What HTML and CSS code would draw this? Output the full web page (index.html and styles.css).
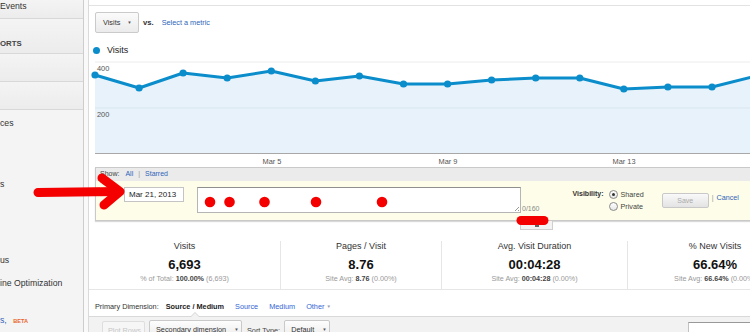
FILE: index.html
```html
<!DOCTYPE html>
<html lang="en">
<head>
    <meta charset="UTF-8">
    <meta name="viewport" content="width=device-width, initial-scale=1.0">
    <title>Audience Overview | Analytics</title>
    <link rel="stylesheet" href="styles.css">
</head>
<body>
<div class="page">
    <aside class="sidebar">
        <div class="side-row side-top">Events</div>
        <div class="side-row side-head">ORTS</div>
        <div class="side-row side-blank"></div>
        <div class="side-row side-blank"></div>
        <ul class="side-list">
            <li class="item-ces">ces</li>
            <li class="item-s">s</li>
            <li class="item-us">us</li>
            <li class="item-seo">ine Optimization</li>
            <li class="item-beta"><span class="side-link">s,</span> <span class="beta">BETA</span></li>
        </ul>
    </aside>
    <div class="gutter"></div>

    <main class="main">
        <div class="metric-bar">
            <button class="select-btn">Visits <span class="caret">&#9660;</span></button>
            <span class="vs">vs.</span>
            <a class="link" href="#">Select a metric</a>
        </div>

        <div class="legend"><span class="legend-dot"></span>Visits</div>

        <svg class="chart" width="670" height="111" viewBox="0 0 670 111">
            <line x1="6" y1="6" x2="670" y2="6" stroke="#ececec"/>
            <line x1="6" y1="52" x2="670" y2="52" stroke="#e4e4e4"/>
            <polygon fill="#e7f2fa" points="6,19 50.1,32 94.1,17 138.2,22 182.3,15 226.4,25 270.4,20 314.5,28 358.6,28 402.6,24 446.7,22 490.8,22 534.8,33 578.9,31 623,31 667,20 667,97 6,97"/>
            <line x1="6" y1="52" x2="670" y2="52" stroke="#d9e7f0"/>
            <line x1="6" y1="97.5" x2="670" y2="97.5" stroke="#a8a8a8"/>
            <polyline fill="none" stroke="#0b8dcb" stroke-width="3" stroke-linejoin="round" points="6,19 50.1,32 94.1,17 138.2,22 182.3,15 226.4,25 270.4,20 314.5,28 358.6,28 402.6,24 446.7,22 490.8,22 534.8,33 578.9,31 623,31 667,20"/>
            <g fill="#0b8dcb">
                <circle cx="6" cy="19" r="3.6"/>
                <circle cx="50.1" cy="32" r="3.6"/>
                <circle cx="94.1" cy="17" r="3.6"/>
                <circle cx="138.2" cy="22" r="3.6"/>
                <circle cx="182.3" cy="15" r="3.6"/>
                <circle cx="226.4" cy="25" r="3.6"/>
                <circle cx="270.4" cy="20" r="3.6"/>
                <circle cx="314.5" cy="28" r="3.6"/>
                <circle cx="358.6" cy="28" r="3.6"/>
                <circle cx="402.6" cy="24" r="3.6"/>
                <circle cx="446.7" cy="22" r="3.6"/>
                <circle cx="490.8" cy="22" r="3.6"/>
                <circle cx="534.8" cy="33" r="3.6"/>
                <circle cx="578.9" cy="31" r="3.6"/>
                <circle cx="623" cy="31" r="3.6"/>
                <circle cx="667" cy="20" r="3.6"/>
            </g>
            <g class="axis-text">
                <text x="8" y="14.6">400</text>
                <text x="8" y="60.6">200</text>
                <text x="183" y="107.8" text-anchor="middle">Mar 5</text>
                <text x="359" y="107.8" text-anchor="middle">Mar 9</text>
                <text x="535" y="107.8" text-anchor="middle">Mar 13</text>
            </g>
        </svg>

        <div class="annotations">
            <div class="annot-show">Show: <a class="link show-all" href="#">All</a><span class="sep">|</span><a class="link" href="#">Starred</a></div>
            <div class="annot-form">
                <input class="annot-date" type="text" value="Mar 21, 2013">
                <div class="annot-text-box">
                    <textarea class="annot-text"></textarea>
                </div>
                <span class="annot-count">0/160</span>
                <div class="annot-vis">
                    <span class="vis-label">Visibility:</span>
                    <div class="vis-options">
                        <label class="vis-option"><span class="radio checked"></span>Shared</label>
                        <label class="vis-option"><span class="radio"></span>Private</label>
                    </div>
                </div>
                <button class="save-btn">Save</button>
                <span class="cancel"><span class="sep">|</span><a class="link" href="#">Cancel</a></span>
            </div>
        </div>
        <div class="annot-tab"><span class="tab-mark"></span></div>

        <div class="stats">
            <div class="stat">
                <div class="stat-label">Visits</div>
                <div class="stat-value">6,693</div>
                <div class="stat-sub">% of Total: <b>100.00%</b> (6,693)</div>
            </div>
            <div class="stat">
                <div class="stat-label">Pages / Visit</div>
                <div class="stat-value">8.76</div>
                <div class="stat-sub">Site Avg: <b>8.76</b> (0.00%)</div>
            </div>
            <div class="stat">
                <div class="stat-label">Avg. Visit Duration</div>
                <div class="stat-value">00:04:28</div>
                <div class="stat-sub">Site Avg: <b>00:04:28</b> (0.00%)</div>
            </div>
            <div class="stat">
                <div class="stat-label">% New Visits</div>
                <div class="stat-value">66.64%</div>
                <div class="stat-sub">Site Avg: <b>66.64%</b> (0.00%)</div>
            </div>
        </div>

        <div class="dimension">
            <span>Primary Dimension:</span>
            <span class="dim-active">Source / Medium</span>
            <a class="dim-link" href="#">Source</a>
            <a class="dim-link" href="#">Medium</a>
            <a class="dim-link" href="#">Other <span class="dim-caret">&#9660;</span></a>
        </div>

        <div class="table-toolbar">
            <button class="tool-btn plot-btn">Plot Rows</button>
            <button class="tool-btn second-btn">Secondary dimension <span class="caret">&#9660;</span></button>
            <span class="sort-label">Sort Type:</span>
            <button class="tool-btn sort-btn">Default <span class="caret">&#9660;</span></button>
            <input class="search-box" type="text">
        </div>
    </main>

    <svg class="markup" width="750" height="332" viewBox="0 0 750 332">
        <g fill="none" stroke="#f40000" stroke-linecap="round" stroke-linejoin="round">
            <path d="M38 192.5 L115 191.5" stroke-width="9"/>
            <path d="M102 178 L120 191.5 L104 205" stroke-width="9"/>
            <path d="M521 220.5 L544 220.5" stroke-width="9"/>
        </g>
        <g fill="#f40000">
            <circle cx="210" cy="202" r="5.3"/>
            <circle cx="229.5" cy="202" r="5.3"/>
            <circle cx="264.5" cy="202" r="5.3"/>
            <circle cx="316" cy="202" r="5.3"/>
            <circle cx="382" cy="202" r="5.3"/>
        </g>
    </svg>
</div>
</body>
</html>
```

FILE: styles.css
```css
html, body {
    margin: 0;
    padding: 0;
    overflow: hidden;
    background-color: #fff;
}

body {
    font-family: "Liberation Sans", Arial, sans-serif;
    font-size: 7.3px;
    color: #333;
}

.page {
    position: relative;
    display: flex;
    width: 820px;
    height: 332px;
}

a {
    text-decoration: none;
}

.link {
    color: #2f64b9;
}

/* left navigation */

.sidebar {
    width: 83px;
    flex-shrink: 0;
    background-color: #f4f4f4;
    border-right: 1px solid #cdcdcd;
    font-size: 8.7px;
    color: #333;
    white-space: nowrap;
    overflow: hidden;
}

.side-row {
    border-bottom: 1px solid #d8d8d8;
    background: linear-gradient(#f4f4f4, #ececec);
}

.side-top {
    height: 18px;
    line-height: 12px;
}

.side-head {
    height: 15px;
    padding-top: 19px;
    line-height: 12px;
    font-size: 7.8px;
    font-weight: bold;
    color: #444;
}

.side-blank {
    height: 27px;
}

.side-list {
    margin: 0;
    padding: 0;
    list-style: none;
}

.side-list li {
    line-height: 12px;
}

.item-ces { margin-top: 7px; }
.item-s { margin-top: 49px; }
.item-us { margin-top: 64px; }
.item-seo { margin-top: 11px; }
.item-beta { margin-top: 25px; }

.side-link {
    color: #2f64b9;
}

.beta {
    margin-left: 4px;
    font-size: 5.6px;
    font-weight: bold;
    color: #e8642c;
}

.gutter {
    width: 4px;
    flex-shrink: 0;
    background-color: #f9f9f9;
}

/* main column */

.main {
    flex: 1;
    min-width: 0;
    border-left: 1px solid #dadada;
}

.metric-bar {
    display: flex;
    align-items: center;
    margin-top: 5px;
    padding: 6px 0 0 6px;
    border-top: 1px solid #e2e2e2;
}

.select-btn {
    width: 44px;
    height: 21px;
    padding: 0 0 0 7px;
    text-align: left;
    font-family: inherit;
    font-size: 7.3px;
    color: #333;
    background: linear-gradient(#fbfbfb, #ebebeb);
    border: 1px solid #cacaca;
    border-radius: 2px;
}

.select-btn .caret {
    margin-left: 5px;
}

.caret {
    font-size: 4.5px;
    color: #555;
    vertical-align: 1px;
}

.vs {
    margin: 0 8px 0 4px;
    font-weight: bold;
    font-size: 7.7px;
    color: #333;
}

.legend {
    display: flex;
    align-items: center;
    margin-top: 11px;
    padding-left: 4px;
    height: 12px;
    font-size: 9px;
    color: #222;
}

.legend-dot {
    width: 7px;
    height: 7px;
    margin-right: 7px;
    border-radius: 50%;
    background-color: #0b8dcb;
}

.chart {
    display: block;
}

.axis-text {
    font-family: "Liberation Sans", Arial, sans-serif;
    font-size: 7.4px;
    fill: #555;
}

/* annotations */

.annotations {
    margin-left: 6px;
    border: 1px solid #c9c9c9;
    box-shadow: 0 1px 1px rgba(0, 0, 0, 0.15);
}

.annot-show {
    height: 13px;
    padding-left: 4px;
    line-height: 12px;
    font-size: 7px;
    color: #444;
    background-color: #ebebeb;
}

.show-all {
    margin-left: 4px;
}

.sep {
    color: #999;
    margin: 0 5px;
}

.annot-form {
    display: flex;
    align-items: flex-start;
    height: 33px;
    padding: 6px 0 0 28px;
    background-color: #fdfde9;
}

.annot-date {
    box-sizing: border-box;
    width: 60px;
    height: 15px;
    margin: 0;
    padding: 0 0 0 4px;
    font-family: inherit;
    font-size: 8px;
    color: #222;
    background-color: #fff;
    border: 1px solid #c4c4c4;
}

.annot-text-box {
    position: relative;
    width: 324px;
    height: 26px;
    margin-left: 13px;
}

.annot-text-box::after {
    content: "";
    position: absolute;
    right: 2px;
    bottom: 2px;
    width: 6px;
    height: 6px;
    background: repeating-linear-gradient(135deg, transparent 0, transparent 1.2px, #999 1.2px, #999 2px);
    clip-path: polygon(100% 0, 100% 100%, 0 100%);
}

.annot-text {
    box-sizing: border-box;
    display: block;
    width: 324px;
    height: 26px;
    margin: 0;
    padding: 0;
    resize: none;
    background-color: #fff;
    border: 1px solid #b5b5b5;
    border-top-color: #8f8f8f;
}

.annot-count {
    align-self: flex-end;
    margin: 0 0 7px 1px;
    line-height: 8px;
    font-size: 7px;
    color: #888;
}

.annot-vis {
    display: flex;
    margin: 1px 0 0 33px;
}

.vis-label {
    margin-right: 5px;
    line-height: 12px;
    font-size: 7px;
    font-weight: bold;
    color: #333;
}

.vis-options {
    display: flex;
    flex-direction: column;
}

.vis-option {
    display: flex;
    align-items: center;
    height: 12px;
    font-size: 7.2px;
    color: #444;
}

.radio {
    position: relative;
    box-sizing: border-box;
    width: 9px;
    height: 9px;
    margin-right: 3px;
    border: 1px solid #8a8a8a;
    border-radius: 50%;
    background: linear-gradient(#fff, #e6e6e6);
}

.radio.checked::after {
    content: "";
    position: absolute;
    left: 2px;
    top: 2px;
    width: 3px;
    height: 3px;
    border-radius: 50%;
    background-color: #333;
}

.save-btn {
    width: 47px;
    height: 15px;
    margin: 6px 0 0 18px;
    padding: 0;
    font-family: inherit;
    font-size: 7px;
    color: #aaa;
    background: linear-gradient(#f9f9f9, #e3e3e3);
    border: 1px solid #c8c8c8;
    border-radius: 2px;
}

.cancel {
    margin: 6px 0 0 0;
    line-height: 10px;
    font-size: 7.2px;
}

.cancel .sep {
    margin: 0 3px 0 3px;
}

.annot-tab {
    display: flex;
    justify-content: center;
    box-sizing: border-box;
    width: 33px;
    height: 9px;
    margin-left: 431px;
    background-color: #f3f3f3;
    border: 1px solid #cfcfcf;
    border-top: none;
}

.tab-mark {
    width: 4px;
    height: 2px;
    margin-top: 4px;
    background-color: #666;
}

/* scorecards */

.stats {
    display: grid;
    grid-template-columns: 191px 161px 186px 175px;
    margin-top: 11px;
    border-bottom: 1px solid #e6e6e6;
}

.stat {
    padding-bottom: 5px;
    text-align: center;
    white-space: nowrap;
}

.stat + .stat {
    border-left: 1px solid #e6e6e6;
}

.stat-label {
    line-height: 11px;
    font-size: 9px;
    color: #333;
}

.stat-value {
    margin-top: 5px;
    line-height: 16px;
    font-size: 13px;
    font-weight: bold;
    color: #111;
}

.stat-sub {
    margin-top: 1px;
    line-height: 10px;
    font-size: 7.2px;
    color: #999;
}

.stat-sub b {
    color: #444;
}

/* table controls */

.dimension {
    display: flex;
    gap: 11px;
    padding: 11px 0 3px 6px;
    line-height: 12px;
    font-size: 7.3px;
    color: #333;
    border-bottom: 1px solid #d9d9d9;
}

.dim-active {
    position: relative;
    margin-left: -4px;
    font-weight: bold;
    color: #222;
}

.dim-active::before,
.dim-active::after {
    content: "";
    position: absolute;
    left: 50%;
    bottom: -4px;
    border-style: solid;
    border-color: transparent;
}

.dim-active::before {
    margin-left: -5px;
    border-width: 0 5px 5px 5px;
    border-bottom-color: #d4d4d4;
}

.dim-active::after {
    margin-left: -4px;
    border-width: 0 4px 4px 4px;
    border-bottom-color: #f2f2f2;
}

.dim-link {
    color: #3366d6;
}

.dim-caret {
    font-size: 4.5px;
    color: #99a;
    vertical-align: 1px;
}

.table-toolbar {
    display: flex;
    align-items: flex-start;
    height: 20px;
    padding: 3px 0 0 13px;
    background-color: #f2f2f2;
    white-space: nowrap;
}

.tool-btn {
    flex-shrink: 0;
    height: 18px;
    margin: 0;
    padding: 0 6px;
    font-family: inherit;
    font-size: 7.3px;
    color: #333;
    text-align: left;
    white-space: nowrap;
    background: linear-gradient(#fdfdfd, #ececec);
    border: 1px solid #c9c9c9;
    border-radius: 2px;
}

.plot-btn {
    width: 43px;
    margin-top: 1px;
    padding: 0 5px;
    color: #c6c6c6;
    background: #f6f6f6;
    border-color: #dedede;
}

.second-btn {
    width: 93px;
    margin-left: 4px;
}

.second-btn .caret,
.sort-btn .caret {
    margin-left: 6px;
}

.sort-label {
    margin: 6px 4px 0 5px;
    color: #444;
}

.sort-btn {
    width: 46px;
}

.search-box {
    flex-shrink: 0;
    box-sizing: border-box;
    width: 120px;
    height: 18px;
    margin: 2px 0 0 358px;
    background-color: #fff;
    border: 1px solid #c2c2c2;
    border-top-color: #999;
}

/* red markup drawn over the screenshot */

.markup {
    position: absolute;
    left: 0;
    top: 0;
    pointer-events: none;
}
```
